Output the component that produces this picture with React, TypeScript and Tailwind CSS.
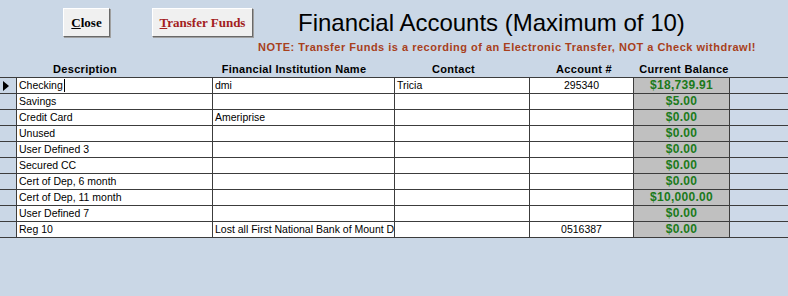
import React from "react";

type Row = {
  desc: string;
  inst: string;
  contact: string;
  acct: string;
  balance: string;
};

const rows: Row[] = [
  { desc: "Checking", inst: "dmi", contact: "Tricia", acct: "295340", balance: "$18,739.91" },
  { desc: "Savings", inst: "", contact: "", acct: "", balance: "$5.00" },
  { desc: "Credit Card", inst: "Ameriprise", contact: "", acct: "", balance: "$0.00" },
  { desc: "Unused", inst: "", contact: "", acct: "", balance: "$0.00" },
  { desc: "User Defined 3", inst: "", contact: "", acct: "", balance: "$0.00" },
  { desc: "Secured CC", inst: "", contact: "", acct: "", balance: "$0.00" },
  { desc: "Cert of Dep, 6 month", inst: "", contact: "", acct: "", balance: "$0.00" },
  { desc: "Cert of Dep, 11 month", inst: "", contact: "", acct: "", balance: "$10,000.00" },
  { desc: "User Defined 7", inst: "", contact: "", acct: "", balance: "$0.00" },
  { desc: "Reg 10", inst: "Lost all First National Bank of Mount D", contact: "", acct: "0516387", balance: "$0.00" },
];

const cols = "grid grid-cols-[17px_196px_182px_135px_104px_96px_1fr]";

function Button({ children, className }: { children: React.ReactNode; className?: string }) {
  return (
    <button
      className={
        "h-[29px] bg-[#f0f0f0] border border-t-white border-l-white border-r-[#696969] border-b-[#696969] shadow-[1px_1px_0_#a0a0a0] font-bold text-[13px] " +
        (className ?? "")
      }
      style={{ fontFamily: '"Liberation Serif", serif' }}
    >
      {children}
    </button>
  );
}

export default function App() {
  return (
    <div
      className="w-[788px] h-[296px] bg-[#cad7e6] overflow-hidden text-black"
      style={{ fontFamily: '"Liberation Sans", Arial, sans-serif' }}
    >
      <div className="flex items-start pt-[8px]">
        <Button className="ml-[63px] w-[47px]">
          <span className="underline">C</span>lose
        </Button>
        <Button className="ml-[42px] w-[101px] text-[#a32020]">
          <span className="underline">T</span>ransfer Funds
        </Button>
        <h1 className="ml-[45px] mt-[1px] text-[24px] leading-[28px] font-normal">
          Financial Accounts (Maximum of 10)
        </h1>
      </div>
      <div className="pl-[258px] mt-[3px] h-[14px] text-[11px] leading-[14px] font-bold text-[#a8401c] tracking-[0.5px] whitespace-nowrap">
        NOTE: Transfer Funds is a recording of an Electronic Transfer, NOT a Check withdrawl!
      </div>

      <div className={cols + " h-[16px] mt-[7px] text-[11px] leading-[16px] font-bold tracking-[0.3px]"}>
        <div />
        <div className="text-center pr-[60px]">Description</div>
        <div className="text-center pr-[20px]">Financial Institution Name</div>
        <div className="text-center pr-[18px]">Contact</div>
        <div className="text-center pl-[4px]">Account #</div>
        <div className="text-center pl-[4px]">Current Balance</div>
        <div />
      </div>

      <div className="border-t border-[#3c3c3c] text-[10.5px] leading-[15px]">
        {rows.map((r, i) => (
          <div key={i} className={cols + " h-[16px]"}>
            <div className="border-r border-b border-[#3c3c3c] flex items-center pl-[3px]">
              {i === 0 && (
                <span className="w-0 h-0 border-y-[5px] border-y-transparent border-l-[6px] border-l-black" />
              )}
            </div>
            <div className="bg-white border-r border-b border-[#3c3c3c] pl-[2px] truncate flex items-center">
              {r.desc}
              {i === 0 && <span className="w-px h-[13px] bg-black ml-px" />}
            </div>
            <div className="bg-white border-r border-b border-[#3c3c3c] pl-[2px] overflow-hidden whitespace-nowrap">
              {r.inst}
            </div>
            <div className="bg-white border-r border-b border-[#3c3c3c] pl-[2px] overflow-hidden whitespace-nowrap">
              {r.contact}
            </div>
            <div className="bg-white border-r border-b border-[#3c3c3c] text-center">{r.acct}</div>
            <div className="bg-[#c0c0c0] border-r border-b border-[#3c3c3c] text-center font-bold text-[12px] tracking-[0.3px] text-[#1b7a1b]">
              {r.balance}
            </div>
            <div className="border-b border-[#3c3c3c] bg-[#cdd9e8]" />
          </div>
        ))}
      </div>
    </div>
  );
}
